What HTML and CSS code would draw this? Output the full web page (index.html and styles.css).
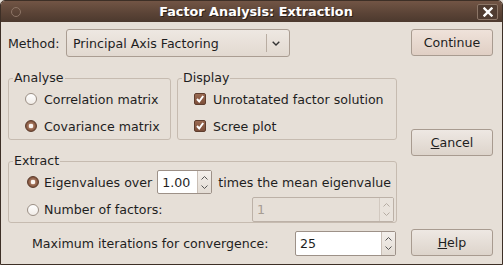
FILE: index.html
```html
<!DOCTYPE html>
<html lang="en">
  <head>
    <meta charset="UTF-8" />
    <title>Factor Analysis: Extraction</title>
    <link rel="stylesheet" href="styles.css">
  </head>
  <body>
    <div class="window">
      <div class="titlebar">
        <span class="tb-menu"></span>
        <span class="tb-title">Factor Analysis: Extraction</span>
        <span class="tb-close">
          <svg width="10" height="10" viewBox="0 0 10 10"><path d="M1.5 1.5 L8.5 8.5 M8.5 1.5 L1.5 8.5" stroke="#fff" stroke-width="2.4" stroke-linecap="square"/></svg>
        </span>
      </div>

      <div class="content">
        <div class="main">
          <div class="method-row">
            <span class="method-label">Method:</span>
            <div class="combo">
              <span class="combo-text">Principal Axis Factoring</span>
              <span class="combo-sep"></span>
              <svg class="combo-arrow" width="8" height="5" viewBox="0 0 8 5"><path d="M0.7 0.7 L4 4 L7.3 0.7" fill="none" stroke="#333" stroke-width="1.4"/></svg>
            </div>
          </div>

          <div class="frames">
            <fieldset class="frame analyse">
              <legend>Analyse</legend>
              <div class="frame-body">
                <div class="opt"><span class="radio"></span>Correlation matrix</div>
                <div class="opt"><span class="radio on"></span>Covariance matrix</div>
              </div>
            </fieldset>
            <fieldset class="frame display">
              <legend>Display</legend>
              <div class="frame-body">
                <div class="opt"><span class="check"><svg width="10" height="10" viewBox="0 0 10 10"><path d="M2 5 L4.2 7.5 L8.2 2" fill="none" stroke="#fff" stroke-width="2"/></svg></span>Unrotatated factor solution</div>
                <div class="opt"><span class="check"><svg width="10" height="10" viewBox="0 0 10 10"><path d="M2 5 L4.2 7.5 L8.2 2" fill="none" stroke="#fff" stroke-width="2"/></svg></span>Scree plot</div>
              </div>
            </fieldset>
          </div>

          <fieldset class="frame extract">
            <legend>Extract</legend>
            <div class="frame-body">
              <div class="opt eigen">
                <span class="radio on"></span>Eigenvalues over
                <div class="spin small">
                  <span class="spin-value">1.00</span>
                  <span class="spin-btns">
                    <svg width="7" height="4" viewBox="0 0 7 4"><path d="M0.5 3.5 L3.5 0.5 L6.5 3.5" fill="none" stroke="#555" stroke-width="1"/></svg>
                    <svg width="7" height="4" viewBox="0 0 7 4"><path d="M0.5 0.5 L3.5 3.5 L6.5 0.5" fill="none" stroke="#555" stroke-width="1"/></svg>
                  </span>
                </div>
                times the mean eigenvalue
              </div>
              <div class="opt factors">
                <span class="radio"></span>Number of factors:
                <div class="spin wide disabled">
                  <span class="spin-value">1</span>
                  <span class="spin-btns">
                    <svg width="7" height="4" viewBox="0 0 7 4"><path d="M0.5 3.5 L3.5 0.5 L6.5 3.5" fill="none" stroke="#b5aca3" stroke-width="1"/></svg>
                    <svg width="7" height="4" viewBox="0 0 7 4"><path d="M0.5 0.5 L3.5 3.5 L6.5 0.5" fill="none" stroke="#b5aca3" stroke-width="1"/></svg>
                  </span>
                </div>
              </div>
            </div>
          </fieldset>

          <div class="iter-row">
            <span>Maximum iterations for convergence:</span>
            <div class="spin iter">
              <span class="spin-value">25</span>
              <span class="spin-btns">
                <svg width="7" height="4" viewBox="0 0 7 4"><path d="M0.5 3.5 L3.5 0.5 L6.5 3.5" fill="none" stroke="#555" stroke-width="1"/></svg>
                <svg width="7" height="4" viewBox="0 0 7 4"><path d="M0.5 0.5 L3.5 3.5 L6.5 0.5" fill="none" stroke="#555" stroke-width="1"/></svg>
              </span>
            </div>
          </div>
        </div>

        <div class="side">
          <button class="btn default">Continue</button>
          <button class="btn"><u>C</u>ancel</button>
          <button class="btn"><u>H</u>elp</button>
        </div>
      </div>
    </div>
  </body>
</html>
```

FILE: styles.css
```css
body {
  margin: 0;
  background: #e6dfd7;
}
.window {
  width: 503px;
  height: 265px;
  box-sizing: border-box;
  border: 1px solid #3d2f26;
  border-radius: 5px 5px 0 0;
  background: #e6dfd7;
  font-family: "DejaVu Sans", sans-serif;
  font-size: 12.6px;
  color: #1e1e1e;
  overflow: hidden;
}
.titlebar {
  height: 21px;
  display: flex;
  align-items: center;
  padding: 0 4px 0 10px;
  background: linear-gradient(#725545, #5a4336 60%, #4c392e);
}
.tb-menu {
  width: 8px;
  height: 8px;
  border: 1px solid #8d7566;
  border-radius: 50%;
}
.tb-title {
  flex: 1;
  text-align: center;
  color: #fff;
  font-weight: bold;
  font-size: 12.8px;
  text-shadow: 1px 1px 0 #2b1f18;
  padding-left: 14px;
}
.tb-close {
  width: 19px;
  height: 14px;
  border: 1px solid #8c7667;
  border-radius: 2px;
  background: #503c31;
  display: flex;
  align-items: center;
  justify-content: center;
}
.content {
  display: flex;
  padding: 7px 9px 0 7px;
}
.main {
  width: 389px;
}
.method-row {
  display: flex;
  align-items: center;
  height: 28px;
  margin-bottom: 13px;
}
.method-label {
  width: 58px;
}
.combo {
  width: 224px;
  height: 28px;
  box-sizing: border-box;
  display: flex;
  align-items: center;
  border: 1px solid #aa9d92;
  border-radius: 3px;
  background: linear-gradient(#eee8e2, #e2d9d0);
}
.combo-text {
  flex: 1;
  padding-left: 6px;
}
.combo-sep {
  width: 1px;
  height: 18px;
  background: #b9ada2;
  margin-right: 5px;
}
.combo-arrow {
  margin-right: 9px;
}
.frames {
  display: flex;
  gap: 6px;
  margin-bottom: 13px;
}
.frame {
  margin: 0;
  padding: 0;
  border: 1px solid #c6bbb0;
  border-radius: 3px;
  min-width: 0;
}
.frame legend {
  margin-left: 4px;
  padding: 0 1px;
  line-height: 16px;
}
.analyse {
  width: 163px;
  box-sizing: border-box;
}
.display {
  flex: 1;
}
.frame-body {
  display: flex;
  flex-direction: column;
  gap: 5px;
  padding: 2px 8px 2px 16px;
}
.opt {
  display: flex;
  align-items: center;
  height: 22px;
  white-space: nowrap;
}
.radio {
  width: 12px;
  height: 12px;
  box-sizing: border-box;
  border: 1px solid #9b8f85;
  border-radius: 50%;
  background: linear-gradient(#ffffff, #f1ece7);
  margin-right: 7px;
}
.radio.on {
  border-color: #5c3b2b;
  background: radial-gradient(circle, #fbf5f0 0 2px, #a87a62 2.6px, #7e5039 5px);
}
.check {
  width: 12px;
  height: 12px;
  box-sizing: border-box;
  border: 1px solid #5e3d2d;
  border-radius: 2px;
  background: linear-gradient(#9a6a52, #7d4f3a);
  margin-right: 7px;
  display: flex;
  align-items: center;
  justify-content: center;
}
.extract .frame-body {
  gap: 3px;
  padding: 1px 1px 0 18px;
}
.extract .opt {
  height: 24px;
}
.extract .opt.factors {
  height: 25px;
}
.extract .radio {
  margin-right: 5px;
}
.spin {
  display: flex;
  box-sizing: border-box;
  border: 1px solid #9d9188;
  border-radius: 2px;
  background: #fff;
  align-self: stretch;
}
.spin-value {
  flex: 1;
  padding-left: 4px;
  display: flex;
  align-items: center;
}
.spin-btns {
  width: 13px;
  border-left: 1px solid #c9bfb6;
  background: linear-gradient(#f3efeb, #e3dcd4);
  display: flex;
  flex-direction: column;
  align-items: center;
  justify-content: space-around;
  padding: 2px 0;
}
.spin.small {
  width: 55px;
  margin: 0 6px 0 5px;
}
.spin.wide {
  width: 142px;
  margin-left: auto;
  margin-right: 1px;
}
.spin.disabled {
  background: #e6dfd7;
  border-color: #bcb1a7;
  color: #a69c92;
}
.spin.disabled .spin-btns {
  background: #e9e3dc;
  border-left-color: #d2c9c0;
}
.iter-row {
  display: flex;
  align-items: center;
  height: 25px;
  margin-top: 8px;
  padding-left: 24px;
}
.iter-row span:first-child {
  flex: 1;
}
.spin.iter {
  width: 101px;
  margin-right: 1px;
}
.side {
  width: 82px;
  height: 227px;
  margin-left: 14px;
  display: flex;
  flex-direction: column;
  justify-content: space-between;
}
.btn {
  height: 27px;
  border: 1px solid #a89b90;
  border-radius: 3px;
  background: linear-gradient(#eee8e3, #ddd4cb);
  font-family: "DejaVu Sans", sans-serif;
  font-size: 12.6px;
  color: #1e1e1e;
  padding: 0;
}
.btn.default {
  background: linear-gradient(#efe2da, #e0cfc4);
}
```
